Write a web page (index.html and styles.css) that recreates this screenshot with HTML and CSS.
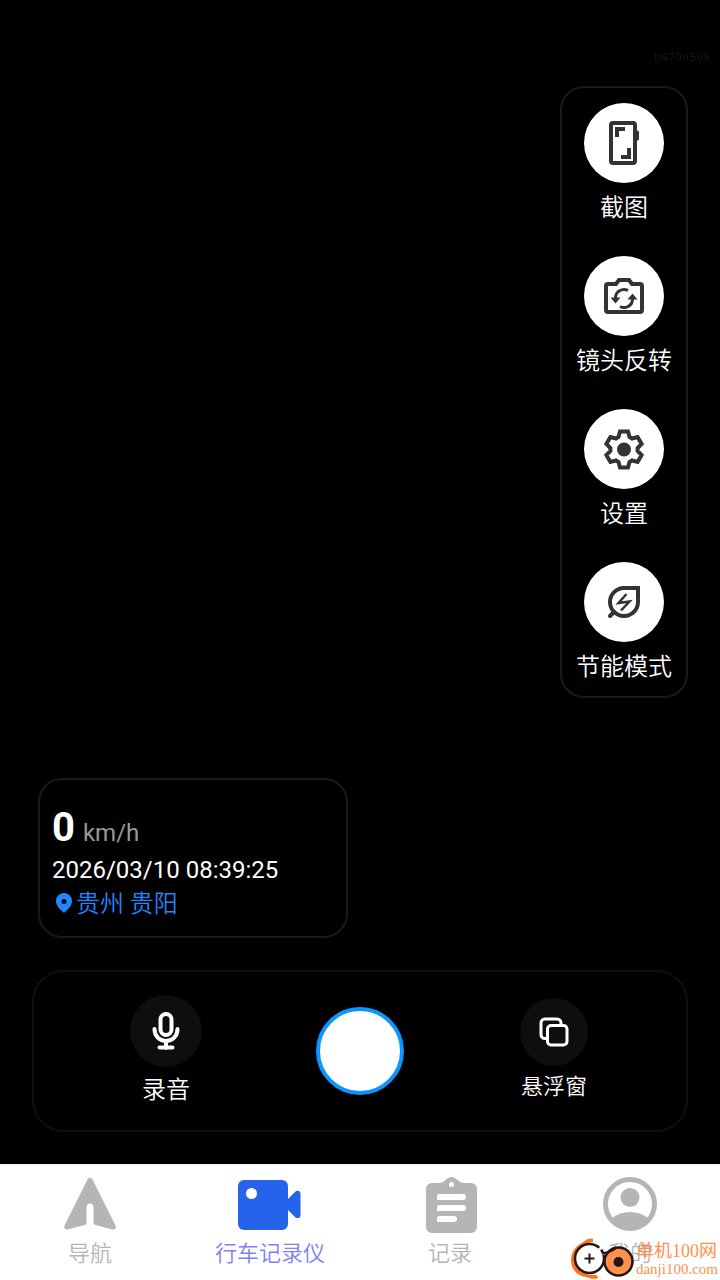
FILE: index.html
```
<!DOCTYPE html>
<html lang="zh-CN">
<head>
    <meta charset="UTF-8">
    <meta name="viewport" content="width=device-width, initial-scale=1.0">
    <title>行车记录仪</title>
    <link rel="stylesheet" href="styles.css">
</head>

<body>
    <main>
        <p class="code">b470d509</p>

        <div class="tools">
            <button class="tool">
                <svg class="disc" width="80" height="80" viewBox="0 0 80 80">
                    <rect x="27" y="20" width="24" height="40" rx="2"/>
                    <path d="M53.500 29v7" stroke-width="3" stroke-linecap="round"/>
                    <path d="M33 34v-8h8M37 54h8v-9"/>
                </svg>
                <span>截图</span>
            </button>
            <button class="tool">
                <svg class="disc" width="80" height="80" viewBox="0 0 80 80">
                    <path d="M24 28h8l3-4h10l3 4h8a2 2 0 0 1 2 2v24a2 2 0 0 1-2 2H24a2 2 0 0 1-2-2V30a2 2 0 0 1 2-2z"/>
                    <path d="M44 34.500a8.500 8.500 0 0 0-12.500 8M36 50.500a8.500 8.500 0 0 0 12.500-8" stroke-width="3"/>
                    <path class="solid" d="M26.500 41.500h10l-5 6zM43.500 43.500h10l-5-6z"/>
                </svg>
                <span>镜头反转</span>
            </button>
            <button class="tool">
                <svg class="disc" width="80" height="80" viewBox="0 0 80 80">
                    <path d="M36 22.500h8l1.500 5.500 2.500 1.500 5.600-1.500 4 7-4 4v3l4 4-4 7-5.600-1.500-2.500 1.500-1.500 5.500h-8l-1.500-5.500-2.500-1.500-5.600 1.500-4-7 4-4v-3l-4-4 4-7 5.600 1.500 2.500-1.500z"/>
                    <circle class="solid" cx="40" cy="40.500" r="7"/>
                </svg>
                <span>设置</span>
            </button>
            <button class="tool">
                <svg class="disc" width="80" height="80" viewBox="0 0 80 80">
                    <path d="M54 26H40a14 14 0 1 0 14 14z"/>
                    <path d="M30 50l-4 4" stroke-linecap="round"/>
                    <path d="M42.500 32L34.500 41l11-1.500-8.500 9" stroke-width="2.500"/>
                </svg>
                <span>节能模式</span>
            </button>
        </div>

        <div class="info">
            <div class="speed"><b>0</b><span>km/h</span></div>
            <div class="time">2026/03/10 08:39:25</div>
            <div class="place">
                <svg width="24" height="24" viewBox="0 0 24 24">
                    <path fill-rule="evenodd" d="M12 1a8 8 0 0 0-8 8c0 5 4 8 8 12 4-4 8-7 8-12a8 8 0 0 0-8-8zm0 6a2.500 2.500 0 1 1 0 5 2.500 2.500 0 0 1 0-5z"/>
                </svg>贵州 贵阳
            </div>
        </div>

        <div class="controls">
            <button class="control">
                <svg class="dark" width="72" height="72" viewBox="0 0 72 72">
                    <rect x="30.500" y="19" width="11" height="21" rx="5.500"/>
                    <path d="M24.500 34c0 7 5 12 11.500 12s11.500-5 11.500-12M36 46v7M29.500 52.500h13"/>
                </svg>
                <span>录音</span>
            </button>
            <button class="shutter" aria-label="拍摄"></button>
            <button class="control float">
                <svg class="dark" width="68" height="68" viewBox="0 0 68 68">
                    <rect x="27.500" y="27.500" width="19.500" height="19.500" rx="3.500"/>
                    <path d="M26 40.500h-1a4 4 0 0 1-4-4V25a4 4 0 0 1 4-4h12a4 4 0 0 1 4 4v1"/>
                </svg>
                <span>悬浮窗</span>
            </button>
        </div>
    </main>

    <nav>
        <a href="#">
            <svg width="72" height="60" viewBox="0 0 72 60">
                <path d="M33.500 5.500q2.500-3.500 5 0l23 46c1 2.500-1 4.500-3 4l-17-4.500q-2-.5-2-2V33a3.500 3.500 0 0 0-7 0v16q0 1.500-2 2l-17 4.500c-2 .5-4-1.500-3-4z"/>
            </svg>
            导航
        </a>
        <a href="#" class="active">
            <svg width="72" height="60" viewBox="0 0 72 60">
                <rect x="4" y="6" width="50" height="50" rx="6"/>
                <path d="M53 26l8.500-8.500c2-1.500 5-.5 5 2v22c0 2.500-3 3.500-5 2L53 35z"/>
                <circle cx="17.500" cy="19.500" r="5.500" fill="#fff"/>
            </svg>
            行车记录仪
        </a>
        <a href="#">
            <svg width="72" height="60" viewBox="0 0 72 60">
                <path d="M18 9h7c4 0 6-3 9-5q3.500-2 7 0c3 2 5 5 9 5h7a6 6 0 0 1 6 6v38a6 6 0 0 1-6 6H18a6 6 0 0 1-6-6V15a6 6 0 0 1 6-6z"/>
                <circle cx="37.500" cy="10.500" r="2.500" fill="#fff"/>
                <path d="M25 20h24a3 3 0 0 1 0 6H23v-4a2 2 0 0 1 2-2zM25 31h24a3 3 0 0 1 0 6H23v-4a2 2 0 0 1 2-2zM25 42h15a3 3 0 0 1 0 6H23v-4a2 2 0 0 1 2-2z" fill="#fff"/>
            </svg>
            记录
        </a>
        <a href="#">
            <svg width="72" height="60" viewBox="0 0 72 60">
                <circle cx="36" cy="30" r="24.500" fill="none" stroke="#b5b5b5" stroke-width="5"/>
                <circle cx="36" cy="23.500" r="9.500"/>
                <path d="M18 44c10-8 26-8 36 0-8 14-28 14-36 0z"/>
            </svg>
            我的
        </a>
        <div class="mark">
            <svg width="66" height="42" viewBox="0 0 66 42">
                <path d="M23 1C19-1 15 3 10 6 4 10 1 15 1 22c0 9 6 16 15 17 4 1 7 3 12 1l-1-3C13 38 5 31 5 22 5 12 12 5 23 4z" fill="#ff7417"/>
                <circle cx="19.500" cy="20.500" r="14.500" fill="#fff" stroke="#231815" stroke-width="2.500"/>
                <path d="M19.500 15.500v10M14.500 20.500h10" stroke="#231815" stroke-width="2"/>
                <path d="M30 9l6 6" stroke="#fff" stroke-width="6"/>
                <circle cx="48.500" cy="23.500" r="14" fill="#ff914d" stroke="#231815" stroke-width="2.500"/>
                <path d="M31.500 11.500c1 7 8 2 14-1" fill="none" stroke="#231815" stroke-width="2.500"/>
                <circle cx="48.500" cy="24" r="5" fill="#231815"/>
            </svg>
            <div>
                <div class="mark-name">单机100网</div>
                <div class="mark-url">danji100.com</div>
            </div>
        </div>
    </nav>
</body>
</html>
```

FILE: styles.css
```
*{
    box-sizing: border-box;
}
body{
    margin: 0;
    min-height: 100vh;
    display: flex;
    flex-direction: column;
    background-color: #000;
    color: #fff;
    font-family: Roboto, "Noto Sans CJK SC", sans-serif;
    font-size: 24px;
    line-height: 32px;
}
button{
    padding: 0;
    border: 0;
    background: none;
    color: inherit;
    font: inherit;
    font-weight: 350;
    cursor: pointer;
}
svg{
    display: block;
    flex: none;
}
main{
    flex: 1;
    display: flex;
    flex-direction: column;
    padding: 48px 32px 32px;
}
.code{
    align-self: flex-end;
    margin: 0 -22px 18px 0;
    color: #141414;
    font-family: "DejaVu Sans", sans-serif;
    font-size: 11px;
    line-height: 20px;
}
.tools{
    align-self: flex-end;
    display: flex;
    flex-direction: column;
    gap: 31px;
    width: 128px;
    padding: 15px 0 12px;
    border: 2px solid #1a1a1a;
    border-radius: 24px;
}
.tool, .control{
    display: flex;
    flex-direction: column;
    align-items: center;
    gap: 8px;
    white-space: nowrap;
}
.tool{
    line-height: 34px;
}
.disc{
    border-radius: 50%;
    background-color: #fff;
    fill: none;
    stroke: #333;
    stroke-width: 4;
}
.disc .solid{
    fill: #333;
    stroke: none;
}
.info{
    width: 310px;
    margin: auto 0 32px 6px;
    padding: 24px 12px 16px;
    border: 2px solid #1a1a1a;
    border-radius: 24px;
}
.speed{
    display: flex;
    align-items: baseline;
    gap: 8px;
    height: 48px;
    color: #999;
    line-height: 48px;
}
.speed b{
    color: #fff;
    font-size: 40px;
}
.time{
    line-height: 36px;
}
.place{
    display: flex;
    align-items: center;
    color: #1e88ff;
    font-weight: 350;
}
.place svg{
    fill: #1e88ff;
}
.controls{
    display: grid;
    grid-template-columns: repeat(3, 1fr);
    align-items: center;
    justify-items: center;
    padding: 23px 35px;
    border: 2px solid #0e0e0e;
    border-radius: 32px;
}
.control{
    gap: 6px;
    line-height: 34px;
}
.float{
    gap: 4px;
    font-size: 22px;
}
.dark{
    border-radius: 50%;
    background-color: #0e0e0e;
    fill: none;
    stroke: #fff;
    stroke-width: 4;
    stroke-linecap: round;
}
.float .dark{
    stroke-width: 3;
}
.shutter{
    width: 88px;
    height: 88px;
    border: 4px solid #0a95ff;
    border-radius: 50%;
    background-color: #fff;
}
nav{
    position: relative;
    display: flex;
    padding: 8px 0 10px;
    border-top: 2px solid #f5f5f5;
    background-color: #fff;
}
nav a{
    flex: 1;
    display: flex;
    flex-direction: column;
    align-items: center;
    gap: 4px;
    color: #b5b5b5;
    fill: #b5b5b5;
    font-size: 22px;
    font-weight: 350;
    text-decoration: none;
}
nav .active{
    color: #8080f5;
    fill: #2563eb;
}
.mark{
    position: absolute;
    right: 2px;
    bottom: 0;
    display: flex;
    align-items: center;
    color: #ff914d;
    font-family: "Liberation Serif", "Noto Sans CJK SC", serif;
    white-space: nowrap;
}
.mark-name{
    font-size: 18px;
    line-height: 20px;
}
.mark-url{
    font-size: 15px;
    line-height: 16px;
}
```
